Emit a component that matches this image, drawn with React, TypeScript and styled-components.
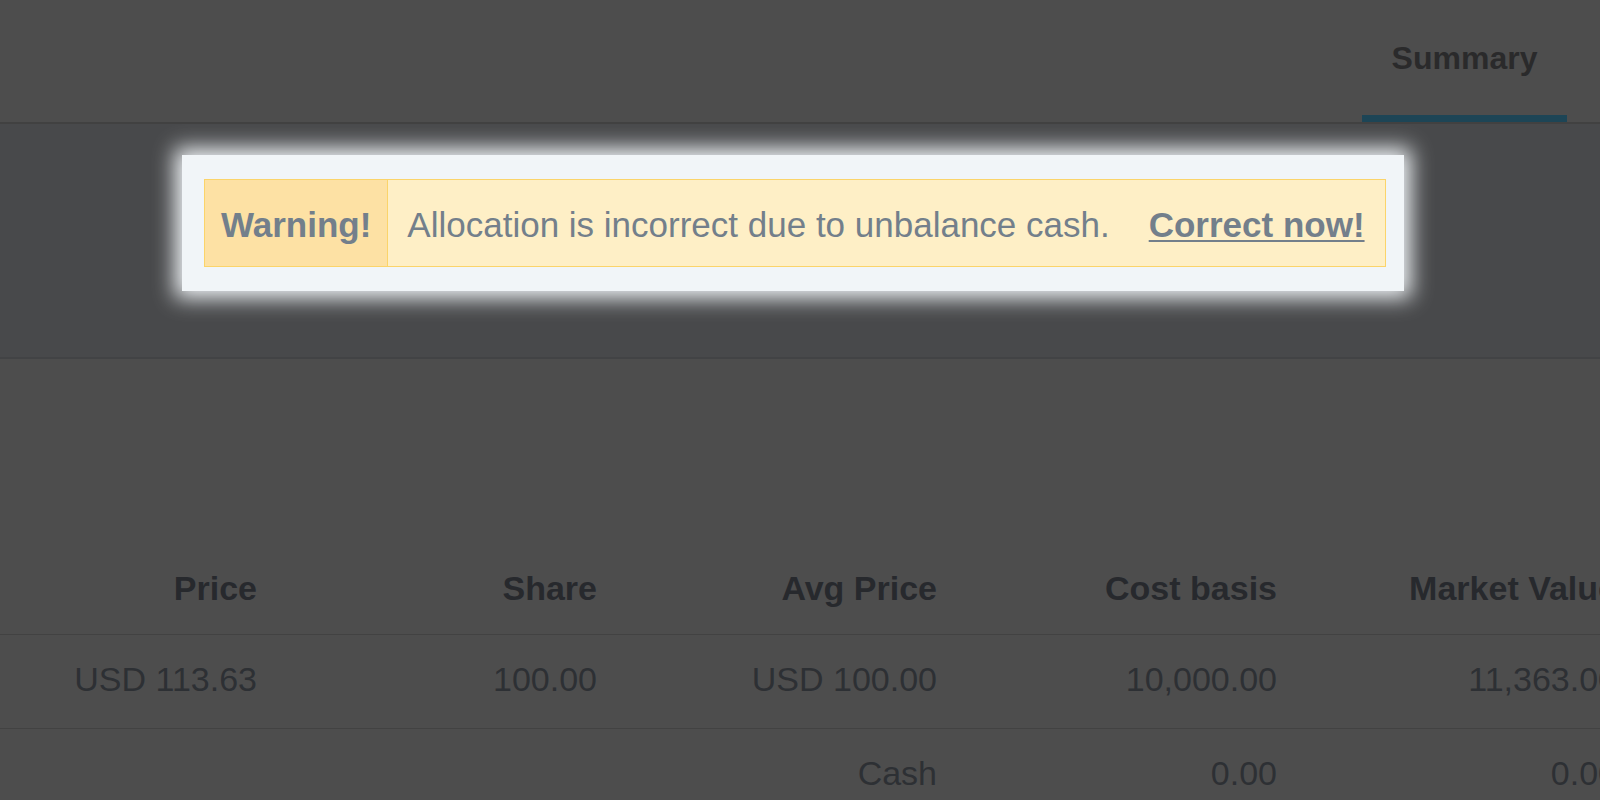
import React from "react";
import styled, { createGlobalStyle } from "styled-components";

const Global = createGlobalStyle`
  html, body { margin: 0; padding: 0; background: #4d4d4d; }
  body { font-family: "Liberation Sans", Arial, Helvetica, sans-serif; overflow: hidden; }
  #root { width: 1600px; height: 800px; overflow: hidden; }
`;

const Page = styled.div`
  display: flex;
  flex-direction: column;
  width: 1600px;
  height: 800px;
  overflow: hidden;
  background: #4d4d4d;
`;

const Header = styled.header`
  height: 122px;
  flex: none;
  display: flex;
  justify-content: flex-end;
  padding-right: 33px;
  border-bottom: 2px solid #414141;
  background: #4d4d4d;
`;

const Tab = styled.div<{ $active?: boolean }>`
  box-sizing: border-box;
  width: 205px;
  height: 122px;
  padding-top: 40px;
  text-align: center;
  font-size: 32px;
  font-weight: 700;
  line-height: 36px;
  color: #2a2a2b;
  border-bottom: 7px solid ${(p) => (p.$active ? "#1d4556" : "transparent")};
`;

const AlertBand = styled.section`
  height: 235px;
  flex: none;
  box-sizing: border-box;
  padding: 31px 0 0 182px;
  background: #48494b;
  border-bottom: 2px solid #424345;
  display: flex;
  align-items: flex-start;
`;

const Spotlight = styled.div`
  display: flex;
  padding: 24px 18px 24px 22px;
  background: #f1f5f8;
  box-shadow: 0 0 20px 7px #f1f5f8;
`;

const Banner = styled.div`
  display: flex;
  box-sizing: border-box;
  height: 88px;
  border: 1px solid #fbd46a;
  background: #feefc6;
  color: #737f8b;
  font-size: 35px;
  line-height: 40px;
`;

const BannerLabel = styled.strong`
  padding: 25px 16px 21px;
  background: #fde1a4;
  border-right: 1px solid #fbd46a;
  font-weight: 700;
`;

const BannerMessage = styled.div`
  display: flex;
  gap: 39px;
  padding: 25px 20px 21px 19px;
`;

const BannerLink = styled.a`
  color: #737f8b;
  font-weight: 700;
  text-decoration: underline;
  text-decoration-thickness: 2px;
  text-underline-offset: 3px;
  cursor: pointer;
`;

const Body = styled.main`
  flex: 1;
  overflow: hidden;
  padding-top: 182px;
`;

const Row = styled.div<{ $last?: boolean }>`
  display: grid;
  grid-template-columns: 277px repeat(4, 340px);
  width: max-content;
  border-bottom: 1px solid ${(p) => (p.$last ? "transparent" : "#424242")};
`;

const Cell = styled.div<{ $head?: boolean }>`
  height: 93px;
  box-sizing: border-box;
  padding-right: 20px;
  padding-bottom: ${(p) => (p.$head ? 0 : 5)}px;
  display: flex;
  align-items: center;
  justify-content: flex-end;
  white-space: nowrap;
  font-size: 34px;
  line-height: 38px;
  font-weight: ${(p) => (p.$head ? 700 : 400)};
  color: ${(p) => (p.$head ? "#27292d" : "#2d3034")};
`;

const headers = ["Price", "Share", "Avg Price", "Cost basis", "Market Value"];
const rows = [
  ["USD 113.63", "100.00", "USD 100.00", "10,000.00", "11,363.00"],
  ["", "", "Cash", "0.00", "0.00"],
];

export default function App() {
  return (
    <Page>
      <Global />
      <Header>
        <Tab $active>Summary</Tab>
      </Header>
      <AlertBand>
        <Spotlight>
          <Banner role="alert">
            <BannerLabel>Warning!</BannerLabel>
            <BannerMessage>
              <span>Allocation is incorrect due to unbalance cash.</span>
              <BannerLink>Correct now!</BannerLink>
            </BannerMessage>
          </Banner>
        </Spotlight>
      </AlertBand>
      <Body>
        <Row>
          {headers.map((h) => (
            <Cell key={h} $head>
              {h}
            </Cell>
          ))}
        </Row>
        {rows.map((r, i) => (
          <Row key={i} $last={i === rows.length - 1}>
            {r.map((c, j) => (
              <Cell key={j}>{c}</Cell>
            ))}
          </Row>
        ))}
      </Body>
    </Page>
  );
}
